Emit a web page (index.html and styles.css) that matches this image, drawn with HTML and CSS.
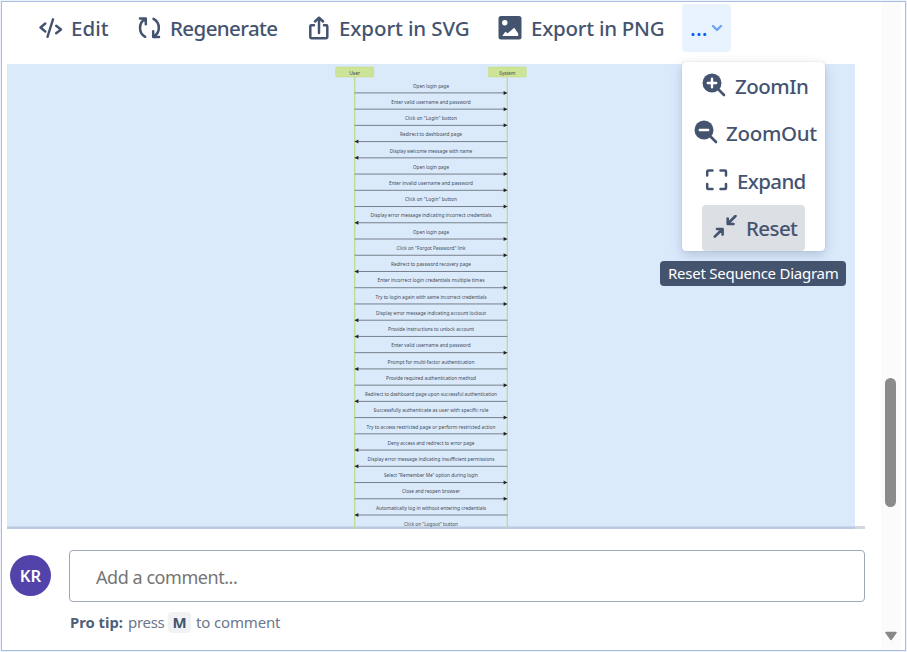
FILE: index.html
```html
<!DOCTYPE html>
<html lang="en">
<head>
<meta charset="utf-8">
<title>Sequence Diagram</title>
<link rel="stylesheet" href="styles.css">
</head>
<body>
<div class="frame">
  <main class="content">
    <nav class="toolbar">
      <button class="tool edit"><svg width="24" height="24" viewBox="0 0 24 24" fill="none" stroke="currentColor" stroke-width="2.400" stroke-linecap="round" stroke-linejoin="round"><path d="M6.300 7.500 1.500 11.500l4.800 4M17.200 9.700 22 13.500 17.200 17.300M14 3.300 8.500 20.800"/></svg><span class="label">Edit</span></button>
      <button class="tool regenerate"><svg width="24" height="24" viewBox="0 0 24 24" fill="none" stroke="currentColor" stroke-width="2.500" stroke-linecap="round" stroke-linejoin="round"><path d="M2 2.500H7.800V8.300M7.200 3.200C.3 6.800.3 17 7.200 20.800M21 21H15.200V15.200M15.500 20.500C22.600 16.700 22.600 6.700 15.500 2.800"/></svg><span class="label">Regenerate</span></button>
      <button class="tool svg-export"><svg width="24" height="24" viewBox="0 0 24 24" fill="none" stroke="currentColor" stroke-width="2.500" stroke-linecap="round" stroke-linejoin="round"><path d="M7 9.200H4.300a1 1 0 0 0-1 1V20.700a1.500 1.500 0 0 0 1.500 1.500h14a1.500 1.500 0 0 0 1.500-1.500V10.200a1 1 0 0 0-1-1H17M12 17V2M8 5.500 12 1.700 16 5.500"/></svg><span class="label">Export in SVG</span></button>
      <button class="tool png-export"><svg width="24" height="24" viewBox="0 0 24 24"><rect x=".5" y="0" width="23" height="23.500" rx="2.500" fill="currentColor"/><circle cx="6.800" cy="6.700" r="2.700" fill="#fff"/><path d="m4.300 20 3-4.200 2.400 1.400L16.200 11.800l4 5.700V20Z" fill="#fff"/></svg><span class="label">Export in PNG</span></button>
      <button class="more"><span class="dots">...</span><svg width="12" height="9" viewBox="0 0 12 9" fill="none" stroke="#6ea5fa" stroke-width="2.400" stroke-linecap="round" stroke-linejoin="round"><path d="m2 2 4 4 4-4"/></svg></button>
    </nav>
    <section class="canvas"><svg id="diagram" width="848" height="465" viewBox="7 64 848 465"></svg></section>
    <section class="comment">
      <div class="avatar">KR</div>
      <div class="editor">
        <div class="input">Add a comment...</div>
        <p class="tip"><b>Pro tip:</b><span class="press">press</span><kbd>M</kbd><span class="to">to comment</span></p>
      </div>
    </section>
  </main>
  <aside class="scrollbar"><div class="thumb"></div><svg class="down" width="12" height="10" viewBox="0 0 12 10"><path d="M1 1.500h10L6 8.500Z" fill="#888" stroke="#888" stroke-width="1.500" stroke-linejoin="round"/></svg></aside>
</div>
<div class="menu">
  <div class="item zoom-in"><svg width="24" height="24" viewBox="0 0 24 24" fill="none" stroke-linecap="round"><circle cx="10" cy="10" r="9.500" fill="currentColor"/><path d="m16.500 16.500 5.500 5.500" stroke="currentColor" stroke-width="2.600"/><path d="M10 5.800v8.400M5.800 10h8.400" stroke="#fff" stroke-width="2.400"/></svg><span class="label">ZoomIn</span></div>
  <div class="item zoom-out"><svg width="24" height="24" viewBox="0 0 24 24" fill="none" stroke-linecap="round"><circle cx="10" cy="10" r="9.500" fill="currentColor"/><path d="m16.500 16.500 5.500 5.500" stroke="currentColor" stroke-width="2.600"/><path d="M5.800 10h8.400" stroke="#fff" stroke-width="2.400"/></svg><span class="label">ZoomOut</span></div>
  <div class="item expand"><svg width="24" height="24" viewBox="0 0 24 24" fill="none" stroke="currentColor" stroke-width="2.500" stroke-linecap="round" stroke-linejoin="round"><path d="M2.200 7.500V3.500a1 1 0 0 1 1-1H7.500M15.500 2.500h4.500a1 1 0 0 1 1 1V7.500M21 16V20a1 1 0 0 1-1 1H15.500M7.500 21H3.200a1 1 0 0 1-1-1v-4"/></svg><span class="label">Expand</span></div>
  <div class="item reset"><svg width="24" height="24" viewBox="0 0 24 24" fill="none" stroke="currentColor" stroke-width="2.600" stroke-linecap="round" stroke-linejoin="round"><path d="m22.500 1-7.500 7.500M14.700 3.500V9H20.500M1.800 21.700 9 14.500M4 14h5.600v5.600"/></svg><span class="label">Reset</span></div>
</div>
<div class="tooltip"><span class="label">Reset Sequence Diagram</span></div>
<script src="script.js"></script>
</body>
</html>
```
FILE: styles.css
```css
* { box-sizing: border-box; }
body { margin: 0; width: 907px; height: 652px; overflow: hidden; background: #edf2fb; font-family: "Noto Sans", "Open Sans", sans-serif; color: #44546f; }
.frame { display: flex; justify-content: space-between; margin: 1px; width: 905px; height: 650px; border: 1px solid #a9bde2; background: #fff; }
.content { width: 864px; padding-left: 5px; }
.toolbar { display: flex; height: 62px; padding: 2px 0 0 32px; align-items: flex-start; }
button { font: inherit; color: inherit; border: 0; padding: 0; background: none; }
.tool { display: flex; align-items: center; height: 48px; flex: none; font-size: 20.500px; font-weight: 500; white-space: nowrap; }
.tool svg { flex: none; margin-right: 8px; }
.tool .label { display: block; }
.edit { width: 99px; }
.regenerate { width: 169px; letter-spacing: -.6px; }
.svg-export { width: 191px; letter-spacing: -.1px; }
.png-export { width: 184px; letter-spacing: -.25px; }
.png-export svg { margin-right: 9px; }
.more { display: flex; align-items: center; width: 49px; height: 48px; padding-left: 8px; border-radius: 4px; background: #e9f2ff; color: #0c5cf5; font-size: 21px; flex: none; gap: 3px; }
.dots { font-weight: 500; letter-spacing: .2px; line-height: 46px; }
.canvas { height: 465px; border-bottom: 3px solid #d5d6e0; width: 858px; }
.canvas svg { display: block; background: #dbeafb; }
#diagram .ground { fill: #bac9df; }
#diagram text { font-size: 5px; fill: #444b54; text-anchor: middle; }
#diagram .life { stroke: #bcdc92; stroke-width: 1.300; }
#diagram .box { fill: #cde498; stroke: #bddb75; stroke-width: .5; }
#diagram .message { stroke: #6b747f; stroke-width: .9; }
#diagram .head { fill: #222; }
.comment { display: flex; padding: 20px 0 0 3px; }
.avatar { display: flex; align-items: center; justify-content: center; width: 41px; height: 41px; margin: 6px 18px 0 0; border-radius: 50%; background: #5243aa; color: #fff; font-size: 16.500px; font-weight: 600; flex: none; }
.input { width: 796px; height: 52px; margin-top: 1px; padding-left: 26px; border: 1px solid #a0a8b8; border-radius: 4px; color: #757575; font-size: 18px; letter-spacing: -.45px; line-height: 52px; }
.tip { display: flex; align-items: center; height: 22px; margin: 9px 0 0; font-size: 15px; color: #6b778c; white-space: nowrap; }
.tip b { width: 59px; padding-left: 1px; color: #505f79; font-weight: 700; font-size: 14.800px; }
.press { width: 40px; letter-spacing: -.3px; }
.to { letter-spacing: -.15px; }
kbd { width: 23px; height: 21px; margin-right: 5px; border-radius: 4px; background: #f1f2f4; color: #44546f; font: 700 15px/21px "Noto Sans", sans-serif; text-align: center; }
.scrollbar { display: flex; flex-direction: column; align-items: center; width: 20px; height: 100%; margin-right: 4px; padding-top: 376px; background: #fbfbfb; }
.thumb { width: 11px; height: 129px; margin-right: 1px; border-radius: 6px; background: #8b8b8b; }
.down { margin: 124px 1px 0 0; }
.menu { position: absolute; left: 682px; top: 62px; width: 143px; height: 189px; border-radius: 4px; background: #fff; box-shadow: 0 4px 12px rgba(60,80,120,.25), 0 0 1px rgba(60,80,120,.4); font-size: 20.500px; font-weight: 500; }
.item { display: flex; align-items: center; height: 47.500px; gap: 8px; white-space: nowrap; }
.item svg { flex: none; }
.zoom-in { padding-left: 20px; gap: 9px; letter-spacing: -.5px; }
.zoom-out { padding-left: 12px; letter-spacing: -.3px; }
.expand { padding-left: 23px; letter-spacing: -.65px; }
.reset { width: 103px; height: 46px; margin-left: 20px; padding-left: 11px; border-radius: 4px; background: #dcdfe4; gap: 9px; letter-spacing: -.6px; }
.item svg { margin-top: -2px; }
.tooltip { position: absolute; left: 660px; top: 261px; width: 186px; height: 25px; padding-left: 8px; border-radius: 4px; background: #44546f; color: #fff; font-size: 15px; letter-spacing: -.25px; line-height: 25px; white-space: nowrap; }
```
FILE: script.js
```js
const messages = [
  ['Open login page', 1, 36],
  ['Enter valid username and password', 1, 79.5],
  ['Click on "Login" button', 1, 52],
  ['Redirect to dashboard page', 0, 62],
  ['Display welcome message with name', 0, 82.5],
  ['Open login page', 1, 36],
  ['Enter invalid username and password', 1, 84],
  ['Click on "Login" button', 1, 52],
  ['Display error message indicating incorrect credentials', 0, 121],
  ['Open login page', 1, 36],
  ['Click on "Forgot Password" link', 1, 69],
  ['Redirect to password recovery page', 0, 80],
  ['Enter incorrect login credentials multiple times', 1, 107],
  ['Try to login again with same incorrect credentials', 1, 111],
  ['Display error message indicating account lockout', 0, 110],
  ['Provide instructions to unlock account', 0, 86],
  ['Enter valid username and password', 1, 79.5],
  ['Prompt for multi-factor authentication', 0, 87],
  ['Provide required authentication method', 1, 90],
  ['Redirect to dashboard page upon successful authentication', 0, 132],
  ['Successfully authenticate as user with specific role', 1, 115],
  ['Try to access restricted page or perform restricted action', 1, 129],
  ['Deny access and redirect to error page', 0, 87],
  ['Display error message indicating insufficient permissions', 0, 127],
  ['Select "Remember Me" option during login', 1, 94],
  ['Close and reopen browser', 1, 58],
  ['Automatically log in without entering credentials', 0, 110],
  ['Click on "Logout" button', 1, 54]
];
const left = 354.7, right = 507.3, step = 16.235;
let out = '<rect class="ground" x="7" y="526.5" width="848" height="2.5"/>' +
  `<path class="life" d="M${left} 77V529M${right} 77V529"/>`;
[[left, 'User', 11], [right, 'System', 16]].forEach(([x, name, w]) => {
  out += `<rect class="box" x="${x - 19}" y="67" width="38" height="10" rx="1"/>` +
    `<text x="${x}" y="74.5" textLength="${w}" lengthAdjust="spacingAndGlyphs">${name}</text>`;
});
messages.forEach(([label, forward, w], i) => {
  const y = 92.9 + i * step;
  out += `<text x="431" y="${y - 5.3}" textLength="${w}" lengthAdjust="spacingAndGlyphs">${label}</text>`;
  if (y > 528) return;
  const tip = forward ? right : left, d = forward ? -3.7 : 3.7;
  out += `<path class="message" d="M${left} ${y}H${right}"/>` +
    `<path class="head" d="M${tip} ${y}l${d} -2v4Z"/>`;
});
document.getElementById('diagram').innerHTML = out;
```
